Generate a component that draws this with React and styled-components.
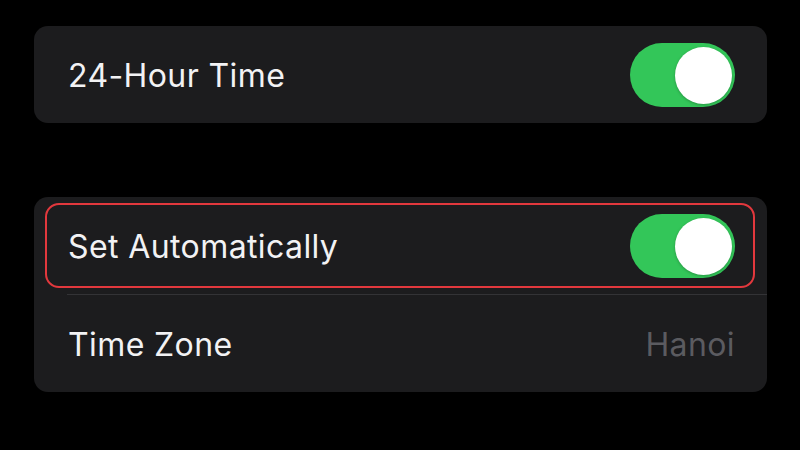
import React from "react";
import styled, { createGlobalStyle } from "styled-components";

const Global = createGlobalStyle`
  html, body { margin: 0; padding: 0; background: #000; }
  body { font-family: Inter, "Noto Sans", "Liberation Sans", sans-serif; }
`;

const Page = styled.div`
  width: 800px;
  height: 450px;
  box-sizing: border-box;
  padding: 26px 33px 0 34px;
  display: flex;
  flex-direction: column;
  gap: 74px;
  background: #000;
`;

const Card = styled.div`
  background: #1c1c1e;
  border-radius: 14px;
  display: flex;
  flex-direction: column;
`;

const Row = styled.div`
  position: relative;
  height: 97px;
  box-sizing: border-box;
  padding: 1px 32px 0 34px;
  display: flex;
  align-items: center;
  justify-content: space-between;
  ${(p) =>
    p.$highlight &&
    `
    &::after {
      content: "";
      position: absolute;
      left: 11px;
      right: 12px;
      top: 6px;
      bottom: 6px;
      border: 2px solid #e2383d;
      border-radius: 14px;
      pointer-events: none;
    }
  `}
`;

const Separator = styled.div`
  height: 1px;
  margin-left: 33px;
  background: #333336;
`;

const Label = styled.span`
  color: #f2f2f4;
  font-size: 32px;
  letter-spacing: 0.4px;
`;

const Value = styled.span`
  color: #5b5b60;
  font-size: 32px;
  letter-spacing: 0.4px;
`;

const Toggle = styled.div`
  width: 105px;
  height: 64px;
  border-radius: 32px;
  background: #33c659;
  display: flex;
  align-items: center;
  justify-content: flex-end;
  padding: 0 3px;
  box-sizing: border-box;
`;

const Knob = styled.div`
  width: 57px;
  height: 57px;
  border-radius: 50%;
  background: #fff;
  box-shadow: 0 1px 3px rgba(0, 0, 0, 0.25);
`;

export default function App() {
  return (
    <>
      <Global />
      <Page>
        <Card>
          <Row>
            <Label>24-Hour Time</Label>
            <Toggle>
              <Knob />
            </Toggle>
          </Row>
        </Card>
        <Card>
          <Row $highlight>
            <Label>Set Automatically</Label>
            <Toggle>
              <Knob />
            </Toggle>
          </Row>
          <Separator />
          <Row>
            <Label>Time Zone</Label>
            <Value>Hanoi</Value>
          </Row>
        </Card>
      </Page>
    </>
  );
}
